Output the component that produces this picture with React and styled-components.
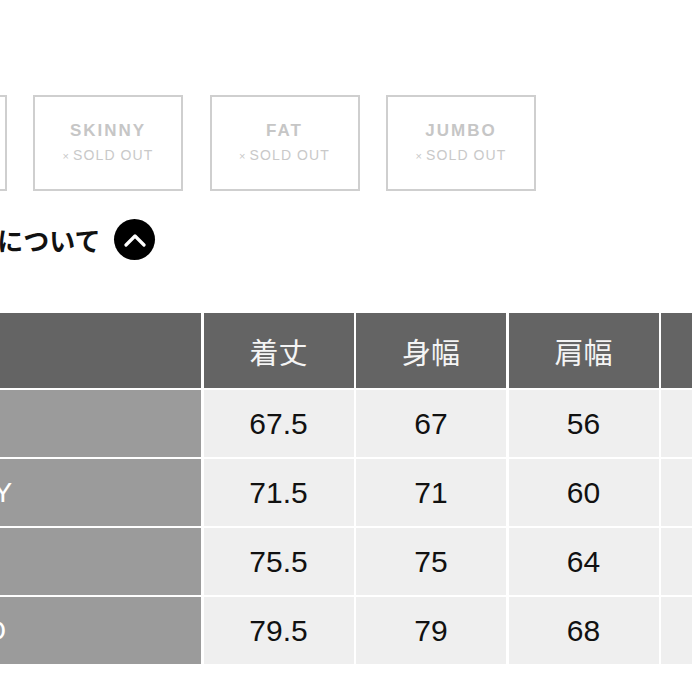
import React from "react";
import styled, { createGlobalStyle } from "styled-components";

const Global = createGlobalStyle`
  html, body { margin: 0; padding: 0; background: #fff; overflow: hidden; }
  body { font-family: "Liberation Sans", Arial, sans-serif; }
`;

const Page = styled.div`
  width: 692px;
  height: 692px;
  overflow: hidden;
  padding-top: 95px;
  box-sizing: border-box;
`;

const VariantRow = styled.div`
  display: flex;
  gap: 26.5px;
  margin-left: -143.5px;
`;

const VariantBox = styled.div`
  flex: 0 0 auto;
  width: 150px;
  height: 96px;
  box-sizing: border-box;
  border: 2px solid #cfcfcf;
  display: flex;
  flex-direction: column;
  align-items: center;
  justify-content: center;
  gap: 7px;
`;

const VariantName = styled.div`
  font-family: "Liberation Sans", Arial, sans-serif;
  font-weight: 700;
  font-size: 17px;
  letter-spacing: 2px;
  color: #c6c6c6;
  line-height: 18px;
`;

const SoldOut = styled.div`
  font-family: "Liberation Sans", Arial, sans-serif;
  font-size: 14px;
  letter-spacing: 1.1px;
  color: #c9c9c9;
  line-height: 16px;
`;

const Times = styled.span`
  font-size: 11px;
  margin-right: 3px;
`;

const Heading = styled.div`
  display: flex;
  align-items: center;
  gap: 14px;
  margin-top: 28px;
  margin-left: -80px;
  height: 41px;
`;

const HeadingText = styled.span`
  font-family: "Noto Sans CJK JP", "Noto Sans", sans-serif;
  font-weight: 700;
  font-size: 26px;
  color: #111;
  line-height: 41px;
`;

const ToggleButton = styled.div`
  width: 41px;
  height: 41px;
  border-radius: 50%;
  background: #000;
  display: flex;
  align-items: center;
  justify-content: center;
  flex: 0 0 auto;
`;

const Table = styled.div`
  margin-top: 53px;
  margin-left: -97px;
  display: grid;
  grid-template-columns: 298px 150px 150px 150px 150px;
  grid-template-rows: 75px repeat(4, 67px);
  column-gap: 2.5px;
  row-gap: 2px;
  background: #fff;
  width: max-content;
`;

const HeadCell = styled.div`
  background: #646464;
  color: #f4f4f4;
  font-family: "Noto Sans CJK JP", "Noto Sans", sans-serif;
  font-weight: 400;
  font-size: 29px;
  display: flex;
  align-items: center;
  justify-content: center;
`;

const LabelCell = styled.div`
  background: #9b9b9b;
  color: #fff;
  font-family: "Liberation Sans", Arial, sans-serif;
  font-size: 28px;
  display: flex;
  align-items: center;
  padding-left: 5px;
`;

const DataCell = styled.div`
  background: #efefef;
  color: #111;
  font-family: "Liberation Sans", Arial, sans-serif;
  font-size: 30px;
  display: flex;
  align-items: center;
  justify-content: center;
`;

const variants = ["SLIM", "SKINNY", "FAT", "JUMBO"];
const headers = ["着丈", "身幅", "肩幅", "袖丈"];
const rows = [
  ["SLIM", "67.5", "67", "56", "22"],
  ["SKINNY", "71.5", "71", "60", "23"],
  ["FAT", "75.5", "75", "64", "24"],
  ["JUMBO", "79.5", "79", "68", "25"],
];

export default function App() {
  return (
    <>
      <Global />
      <Page>
        <VariantRow>
          {variants.map((v) => (
            <VariantBox key={v}>
              <VariantName>{v}</VariantName>
              <SoldOut>
                <Times>×</Times>SOLD OUT
              </SoldOut>
            </VariantBox>
          ))}
        </VariantRow>
        <Heading>
          <HeadingText>サイズについて</HeadingText>
          <ToggleButton>
            <svg width="22" height="14" viewBox="0 0 22 14" fill="none">
              <path d="M2 12 L11 3 L20 12" stroke="#fff" strokeWidth="3.2" strokeLinecap="round" strokeLinejoin="round" />
            </svg>
          </ToggleButton>
        </Heading>
        <Table>
          <HeadCell />
          {headers.map((h) => (
            <HeadCell key={h}>{h}</HeadCell>
          ))}
          {rows.map((r) => (
            <React.Fragment key={r[0]}>
              <LabelCell>{r[0]}</LabelCell>
              {r.slice(1).map((v, i) => (
                <DataCell key={i}>{v}</DataCell>
              ))}
            </React.Fragment>
          ))}
        </Table>
      </Page>
    </>
  );
}
